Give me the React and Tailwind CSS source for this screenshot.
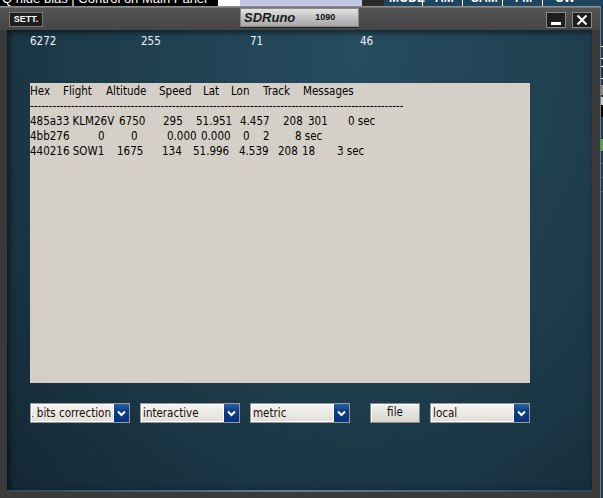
import React from 'react';

const header = [['Hex', 33], ['Flight', 43], ['Altitude', 53], ['Speed', 44], ['Lat', 28], ['Lon', 32], ['Track', 40], ['Messages', 0]];

const rows = [
  [['485a33 KLM26V', 89], ['6750', 44], ['295', 33], ['51.951', 44], ['4.457', 43], ['208', 25], ['301', 40], ['0 sec', 0]],
  [['4bb276', 68], ['0', 33], ['0', 36], ['0.000', 34], ['0.000', 42], ['0', 20], ['2', 32], ['8 sec', 0]],
  [['440216 SOW1', 87], ['1675', 45], ['134', 31], ['51.996', 46], ['4.539', 39], ['208', 24], ['18', 35], ['3 sec', 0]],
];

const Line = ({ cells }) => (
  <div className="flex whitespace-pre">
    {cells.map(([t, w], i) => (
      <span key={i} className="shrink-0" style={w ? { width: w } : undefined}>{t}</span>
    ))}
  </div>
);

const Select = ({ label, shift }) => (
  <div className="flex h-[20px] w-[100px] border border-[#9a9a9a] bg-[#6a6a6a]">
    <div className="flex-1 overflow-hidden border border-white bg-[linear-gradient(#f4f3ef,#e2e0da)] text-[11.5px] leading-[16px] text-[#1a0a0a] whitespace-pre">
      <span className={shift ? 'ml-[-5px] block' : 'ml-[1px] block'}>{label}</span>
    </div>
    <div className="flex w-[15px] items-center justify-center bg-[linear-gradient(#2c60a8,#0a3c86_40%,#08347a)]">
      <svg width="9" height="7" viewBox="0 0 9 7">
        <path d="M1 1.5 L4.5 5 L8 1.5" stroke="white" strokeWidth="2" fill="none" />
      </svg>
    </div>
  </div>
);

export default function App() {
  return (
    <div className="flex h-[498px] w-[603px] flex-col overflow-hidden bg-black font-['DejaVu_Sans_Condensed','DejaVu_Sans',sans-serif]">
      {/* background app peeking over the top */}
      <div className="flex h-[6px] overflow-hidden font-['Liberation_Sans',Arial,sans-serif]">
        <div className="-mt-[8px] w-[218px] whitespace-pre bg-black pl-[2px] text-[13px] leading-[13px] text-white">Q hide bias | Control on Main Panel</div>
        <div className="w-[22px] bg-white" />
        <div className="w-[122px] bg-[#c4c8e6]" />
        <div className="w-[22px] bg-[#2a2a2a]" />
        <div className="-mt-[8px] flex flex-1 bg-[#1f4660] text-[12px] font-bold leading-[12px] text-white">
          <span className="w-[38px] pl-[5px]">MODE</span>
          <span className="w-[40px] border-l border-white pl-[12px]">AM</span>
          <span className="w-[40px] border-l border-white pl-[8px]">SAM</span>
          <span className="w-[40px] border-l border-white pl-[12px]">FM</span>
          <span className="flex-1 border-l border-white pl-[12px]">CW</span>
        </div>
      </div>

      <div className="flex flex-1">
        {/* window */}
        <div className="flex w-[600px] flex-col bg-[#3a3a3a]">
          <div className="h-[2px] bg-[linear-gradient(#9a9a9a,#6a6a6a)]" />
          {/* title bar */}
          <div className="flex h-[22px] items-start bg-[linear-gradient(#555,#454545)] font-['Liberation_Sans',Arial,sans-serif]">
            <div className="ml-[9px] mt-[4px] flex h-[15px] w-[34px] items-center justify-center border border-[#777] bg-[#1e1e1e] text-[9px] font-bold text-white">SETT.</div>
            <div className="ml-[197px] flex h-[19px] w-[119px] items-center border border-[#888] bg-[linear-gradient(#e2e2e2,#c2c2c2_50%,#a8a8a8)] shadow-[0_1px_0_#222]">
              <span className="ml-[3px] text-[13px] font-bold italic text-[#1a1a1a]">SDRuno</span>
              <span className="ml-[20px] text-[9px] font-bold text-[#111]">1090</span>
            </div>
            <div className="ml-auto mt-[4px] flex h-[16px] w-[20px] items-end justify-center border border-[#888] bg-[#1e1e1e] pb-[2px]">
              <div className="h-[3px] w-[10px] bg-white" />
            </div>
            <div className="ml-[6px] mr-[8px] mt-[4px] flex h-[16px] w-[20px] items-center justify-center border border-[#888] bg-[#1e1e1e]">
              <svg width="12" height="12" viewBox="0 0 12 12">
                <path d="M1.5 1.5 L10.5 10.5 M10.5 1.5 L1.5 10.5" stroke="white" strokeWidth="2" />
              </svg>
            </div>
          </div>

          {/* content panel */}
          <div className="ml-[7px] flex h-[460px] w-[585px] flex-col bg-[radial-gradient(ellipse_at_60%_5%,#264c5f_0%,#1d3c4c_55%,#142834_100%)] shadow-[inset_2px_2px_6px_rgba(0,0,0,0.6)]">
            <div className="ml-[23px] mt-[4px] flex text-[11.5px] leading-[15px] text-[#eef2f4]">
              <span className="w-[111px]">6272</span>
              <span className="w-[109px]">255</span>
              <span className="w-[110px]">71</span>
              <span>46</span>
            </div>

            <div className="ml-[23px] mt-[34px] h-[300px] w-[500px] bg-[#d4d0c8] pt-[1px] text-[11.5px] leading-[15px] text-black">
              <Line cells={header} />
              <div className="w-[373px] overflow-hidden whitespace-pre">{'-'.repeat(130)}</div>
              {rows.map((r, i) => (
                <Line key={i} cells={r} />
              ))}
            </div>

            <div className="ml-[23px] mt-[20px] flex items-center">
              <Select label="1 bits correction" shift />
              <div className="ml-[10px]"><Select label="interactive" /></div>
              <div className="ml-[10px]"><Select label="metric" /></div>
              <div className="ml-[20px] flex h-[20px] w-[50px] items-center justify-center border border-[#8a8a8a] bg-[linear-gradient(#f2f1ec,#d8d5ce)] text-[11.5px] text-[#111] shadow-[inset_1px_1px_0_#fff]">file</div>
              <div className="ml-[10px]"><Select label="local" /></div>
            </div>
          </div>
          <div className="ml-[7px] h-[2px] w-[585px] bg-[linear-gradient(90deg,#2c4a58,#5c8590,#2c4a58)]" />
          <div className="flex-1 bg-[#3a3a3a]" />
        </div>
        <div className="w-[1px] bg-[#7a7a7a]" />
        {/* background app at right edge */}
        <div className="flex flex-1 flex-col bg-[#1d3a52]">
          <div className="mt-[40px] h-[1px] bg-white" />
          <div className="mt-[11px] h-[1px] bg-white" />
          <div className="mt-[7px] h-[1px] bg-white" />
          <div className="mt-[11px] h-[1px] bg-white" />
          <div className="mt-[6px] h-[10px] bg-[#888]" />
          <div className="mt-[2px] h-[8px] bg-[#ccc]" />
          <div className="h-[12px] bg-black" />
          <div className="mt-[22px] h-[12px] bg-[#4cb04c]" />
          <div className="mt-[12px] h-[1px] bg-[#3a5ea0]" />
          <div className="mt-[13px] h-[1px] bg-[#3a5ea0]" />
          <div className="mt-[13px] h-[1px] bg-[#3a5ea0]" />
        </div>
      </div>
    </div>
  );
}
